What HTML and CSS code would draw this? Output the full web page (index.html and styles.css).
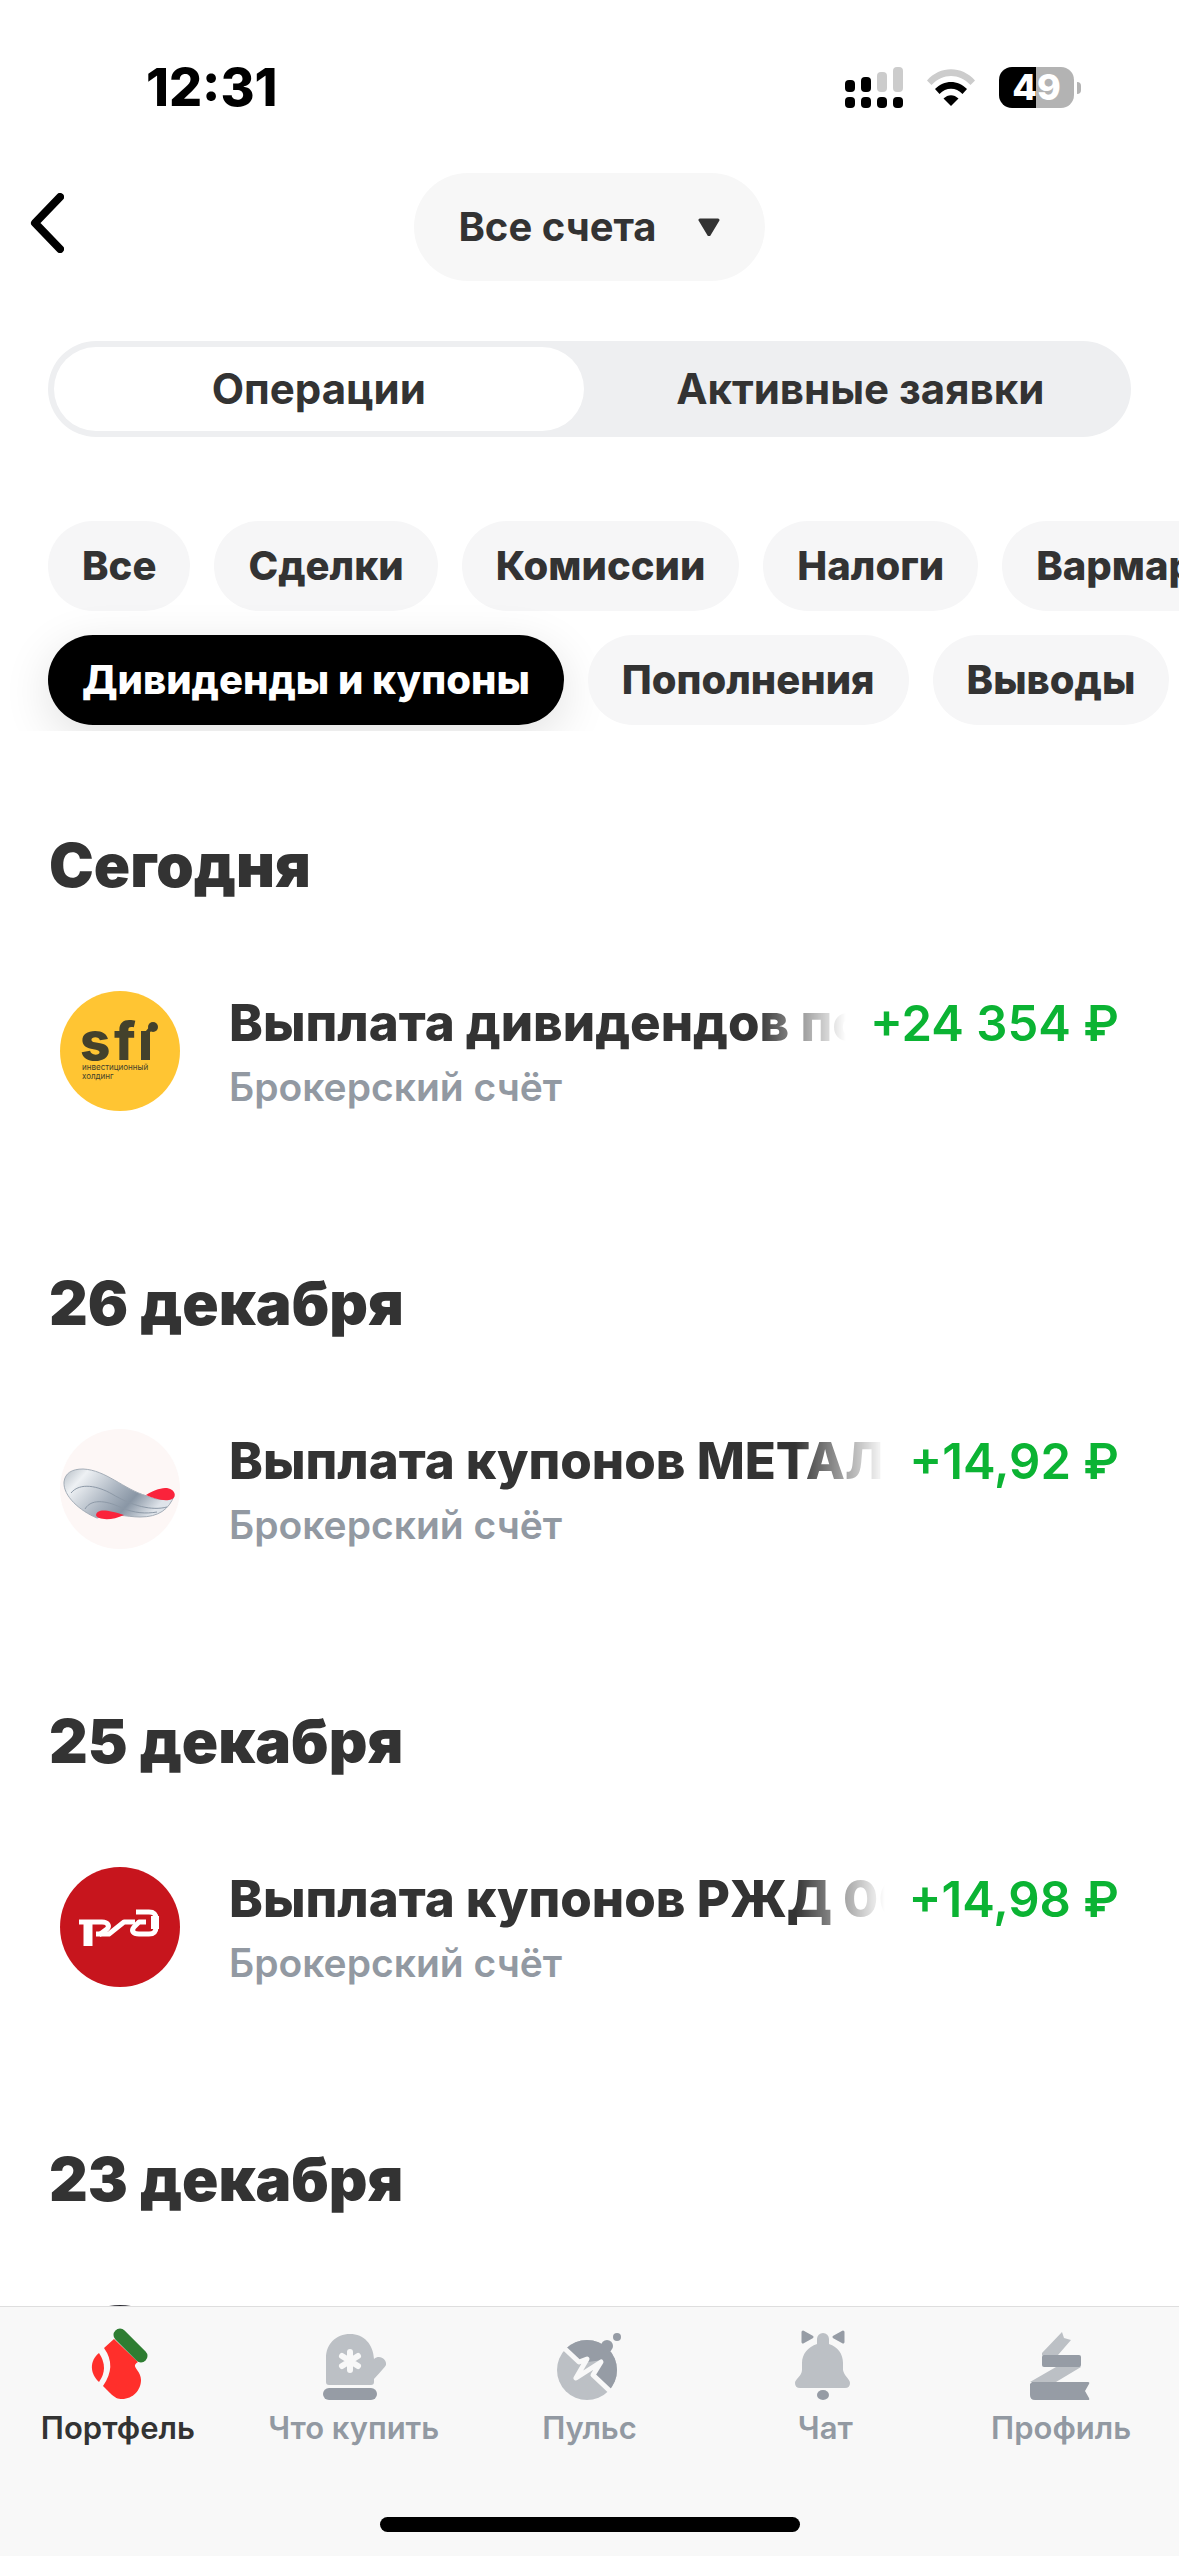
FILE: index.html
```html
<!DOCTYPE html>
<html lang="ru">
<head>
  <meta charset="UTF-8">
  <meta name="viewport" content="width=device-width, initial-scale=1">
  <title>Операции</title>
  <link rel="stylesheet" href="styles.css">
</head>
<body>
<div class="status-bar">
  <time class="clock">12:31</time>
  <div class="status-icons">
    <svg class="signal" viewBox="0 0 58 41" width="58" height="41">
      <rect x="0" y="13" width="10" height="12" rx="4"/>
      <rect x="16" y="10" width="10" height="15" rx="4"/>
      <rect class="dim" x="32" y="5" width="10" height="20" rx="4"/>
      <rect class="dim" x="48" y="0" width="10" height="25" rx="4"/>
      <rect x="0" y="30" width="10" height="11" rx="4"/>
      <rect x="16" y="30" width="10" height="11" rx="4"/>
      <rect x="32" y="30" width="10" height="11" rx="4"/>
      <rect x="48" y="30" width="10" height="11" rx="4"/>
    </svg>
    <svg class="wifi" viewBox="0 0 50 37" width="50" height="37">
      <path class="dim" d="M1 11.500C14-3.500 36-3.500 49 11.500L44.500 16C33 4 17 4 5.500 16L1 11.500Z"/>
      <path d="M9 20C18 10.500 32 10.500 41 20L36.500 25C30 18 20 18 13.500 25L9 20Z"/>
      <path d="M17.500 29.500C22 25 28 25 32.500 29.500L25 37L17.500 29.500Z"/>
    </svg>
    <div class="battery"><span class="battery-level">49</span></div>
  </div>
</div>

<header class="header">
  <button class="back" aria-label="Назад">
    <svg viewBox="0 0 34 60" width="34" height="60"><path d="M30 4L5 30L30 56"/></svg>
  </button>
  <button class="account">
    Все счета
    <svg viewBox="0 0 24 20" width="24" height="20"><path d="M3 4H21L12 19Z"/></svg>
  </button>
</header>

<div class="segments">
  <button class="segment active">Операции</button>
  <button class="segment">Активные заявки</button>
</div>

<div class="filters">
  <div class="chips">
    <button class="chip">Все</button>
    <button class="chip">Сделки</button>
    <button class="chip">Комиссии</button>
    <button class="chip">Налоги</button>
    <button class="chip">Вармаржа</button>
  </div>
  <div class="chips">
    <button class="chip selected">Дивиденды и купоны</button>
    <button class="chip">Пополнения</button>
    <button class="chip">Выводы</button>
  </div>
</div>

<main class="operations">
  <section class="day">
    <h2>Сегодня</h2>
    <div class="operation">
      <svg class="logo" viewBox="0 0 120 120">
        <circle cx="60" cy="60" r="60" fill="#ffc533"/>
        <g fill="#43412c">
          <text class="sfi" x="20 54 78" y="69">sfı</text>
          <path d="M85 44L92 36" stroke="#43412c" stroke-width="4"/>
          <circle cx="93" cy="36" r="5"/>
          <text class="sfi-note" x="22" y="79">инвестиционный</text>
          <text class="sfi-note" x="22" y="88">холдинг</text>
        </g>
      </svg>
      <div class="info">
        <div class="line">
          <span class="name">Выплата дивидендов по</span>
          <span class="amount">+24 354 ₽</span>
        </div>
        <div class="account-name">Брокерский счёт</div>
      </div>
    </div>
  </section>

  <section class="day">
    <h2>26 декабря</h2>
    <div class="operation">
      <svg class="logo" viewBox="0 0 120 120">
        <defs>
          <linearGradient id="wing" x1="0" y1="0" x2="1" y2="0.4">
            <stop offset="0" stop-color="#b4bcc4"/>
            <stop offset="0.2" stop-color="#eef1f4"/>
            <stop offset="0.55" stop-color="#a9b3bf"/>
            <stop offset="0.75" stop-color="#8996a5"/>
            <stop offset="1" stop-color="#dfe4ea"/>
          </linearGradient>
        </defs>
        <circle cx="60" cy="60" r="60" fill="#fdf7f6"/>
        <path d="M4 53C5 44 12 40 23 40C46 41 63 60 87 67C96 71 106 72 114 67C109 80 99 88 80 88C66 88 54 83 37 89C20 82 3 67 4 53Z" fill="url(#wing)" stroke="#a4adb7" stroke-width="1"/>
        <g fill="none" stroke="#8d99a7" stroke-width="1">
          <path d="M11 64C20 53 38 57 52 65C72 77 92 82 107 78"/>
          <path d="M25 80C32 68 50 73 62 79C74 84 86 85 97 83"/>
        </g>
        <g fill="#fa233b">
          <path d="M86 66C95 60 102 59 107 59C117 61 117 70 109 71C101 72 93 69 86 66Z"/>
          <path d="M36 86C37 80 46 80 64 86C52 92 37 91 36 86Z"/>
        </g>
      </svg>
      <div class="info">
        <div class="line">
          <span class="name">Выплата купонов МЕТАЛЛ</span>
          <span class="amount">+14,92 ₽</span>
        </div>
        <div class="account-name">Брокерский счёт</div>
      </div>
    </div>
  </section>

  <section class="day">
    <h2>25 декабря</h2>
    <div class="operation">
      <svg class="logo" viewBox="0 0 120 120">
        <circle cx="60" cy="60" r="60" fill="#c7151d"/>
        <g fill="none" stroke="#fff" stroke-linejoin="round">
          <path d="M19 55H42C48 55 50 59 47 62L39 68" stroke-width="5"/>
          <path d="M28 54V79" stroke-width="9"/>
          <path d="M36 67H49L64 55H75" stroke-width="5"/>
          <path d="M76 45H89C95 45 96 48 96 52V60C96 65 94 67 89 67H79C73 67 71 64 74 60L79 55H86" stroke-width="5"/>
          <path d="M95 49V62" stroke-width="8"/>
        </g>
      </svg>
      <div class="info">
        <div class="line">
          <span class="name">Выплата купонов РЖД 00</span>
          <span class="amount">+14,98 ₽</span>
        </div>
        <div class="account-name">Брокерский счёт</div>
      </div>
    </div>
  </section>

  <section class="day">
    <h2>23 декабря</h2>
    <div class="operation">
      <svg class="logo" viewBox="0 0 120 120"><circle cx="60" cy="60" r="60" fill="#2b2b33"/></svg>
    </div>
  </section>
</main>

<nav class="tab-bar">
  <div class="tabs">
    <a class="tab current" href="#">
      <svg viewBox="0 0 80 80" width="80" height="80">
        <path fill="#ff2f2b" d="M36 15L26 24Q39 42 25 62L32 69C37 74 40 75 44 75C55 75 63 66 63 56C63 48 56 44 57 41Q58 39 60 38Z"/>
        <path fill="#ff2f2b" d="M21 29C11 37 12 50 21 58Q31 44 21 29Z"/>
        <path stroke="#2e7d32" stroke-width="13" stroke-linecap="round" d="M42 11L63 32"/>
      </svg>
      Портфель
    </a>
    <a class="tab" href="#">
      <svg viewBox="0 0 80 80" width="80" height="80">
        <path class="light" d="M12 34C12 20 22 10 36 10C50 10 59 20 60 35C66 30 73 36 72 41Q71 43 60 55V58Q60 61 57 61H15Q12 61 12 58Z"/>
        <rect class="dark" x="9" y="64" width="54" height="12" rx="6"/>
        <path stroke="#f8f8f8" stroke-width="6" stroke-linecap="round" d="M36 28V46M28 32L44 42M44 32L28 42"/>
      </svg>
      Что купить
    </a>
    <a class="tab" href="#">
      <svg viewBox="0 0 80 80" width="80" height="80">
        <defs><clipPath id="ball"><circle cx="38" cy="46" r="30"/></clipPath></defs>
        <circle class="light" cx="38" cy="46" r="30"/>
        <path class="dark" clip-path="url(#ball)" d="M16 24L31 39L54 36L44 51L60 67H80V0H16Z"/>
        <circle class="dark" cx="58" cy="22" r="6"/>
        <circle class="dark" cx="68" cy="13" r="4"/>
        <path fill="none" stroke="#f8f8f8" stroke-width="5" stroke-linejoin="round" d="M14 23L30 38L38 35L27 54L52 38L44 51L62 68"/>
      </svg>
      Пульс
    </a>
    <a class="tab" href="#">
      <svg viewBox="0 0 80 80" width="80" height="80">
        <path class="light" d="M32 20V15A6 6 0 0 1 44 15V20C53 23 58 30 58 39V46C59 52 65 55 65 59Q65 64 60 64H15Q10 64 10 59C10 55 17 52 17 46V39C17 30 23 23 32 20Z"/>
        <path class="dark bow" d="M18 8L27 13L18 18ZM58 8L49 13L58 18Z"/>
        <ellipse class="dark" cx="38" cy="71" rx="6" ry="5"/>
      </svg>
      Чат
    </a>
    <a class="tab" href="#">
      <svg viewBox="0 0 80 80" width="80" height="80">
        <path class="light" d="M21 29L41 8L43 14L50 16L37 31L60 43L35 58H9L35 43L21 31Z"/>
        <rect class="dark" x="21" y="31" width="39" height="12" rx="2"/>
        <path class="dark" d="M9 60L11 58H67Q69 58 68 60L64 67L68 74Q69 76 67 76H14Q9 76 9 71Z"/>
      </svg>
      Профиль
    </a>
  </div>
  <div class="home-indicator"></div>
</nav>
</body>
</html>
```

FILE: styles.css
```css
* {
  box-sizing: border-box;
}
body {
  font-family: Inter, 'Liberation Sans', sans-serif;
  background: #fff;
  color: #333;
  margin: 0;
  height: 100vh;
  display: flex;
  flex-direction: column;
  overflow: hidden;
}
button {
  font: inherit;
  color: inherit;
  background: none;
  border: none;
  padding: 0;
  cursor: pointer;
}
svg {
  display: block;
  flex: none;
}

/* status bar */
.status-bar {
  display: flex;
  justify-content: space-between;
  align-items: center;
  height: 140px;
  padding: 35px 98px 0 146px;
  color: #000;
}
.clock {
  font-size: 52px;
  font-weight: 800;
}
.status-icons {
  display: flex;
  align-items: center;
  gap: 23px;
}
.dim {
  fill: #ccc;
}
.battery {
  display: flex;
  align-items: center;
  gap: 3px;
}
.battery::after {
  content: "";
  width: 4px;
  height: 12px;
  border-radius: 0 6px 6px 0;
  background: #b3b3b3;
}
.battery-level {
  width: 75px;
  line-height: 41px;
  border-radius: 13px;
  background: linear-gradient(90deg, #000 49%, #b3b3b3 49%);
  color: #fff;
  font-size: 36px;
  font-weight: 800;
  text-align: center;
}

/* header */
.header {
  display: grid;
  grid-template-columns: 1fr auto 1fr;
  align-items: center;
  padding: 33px 30px 0;
}
.back {
  justify-self: start;
  padding-bottom: 9px;
}
.back path {
  fill: none;
  stroke: #000;
  stroke-width: 8;
  stroke-linecap: round;
  stroke-linejoin: round;
}
.account {
  display: flex;
  align-items: center;
  gap: 40px;
  height: 108px;
  padding: 0 44px 2px;
  border-radius: 54px;
  background: #f7f7f7;
  font-size: 40px;
  font-weight: 700;
}
.account path {
  fill: #333;
  stroke: #333;
  stroke-width: 3;
  stroke-linejoin: round;
}

/* operations / orders switch */
.segments {
  display: grid;
  grid-template-columns: 1fr 1fr;
  gap: 12px;
  margin: 60px 48px 0;
  padding: 6px;
  border-radius: 48px;
  background: #eeeff1;
}
.segment {
  height: 84px;
  padding-bottom: 2px;
  border-radius: 42px;
  font-size: 42px;
  font-weight: 700;
}
.segment.active {
  background: #fff;
}

/* filters */
.filters {
  display: flex;
  flex-direction: column;
  gap: 24px;
  margin-top: 84px;
  padding: 0 0 6px 48px;
  overflow: hidden;
}
.chips {
  display: flex;
  gap: 24px;
}
.chip {
  flex: none;
  height: 90px;
  padding: 0 34px 2px;
  border-radius: 45px;
  background: #f6f6f7;
  font-size: 40px;
  font-weight: 800;
  white-space: nowrap;
}
.chip.selected {
  background: #000;
  color: #fff;
  box-shadow: 0 12px 48px rgba(0, 0, 0, 0.12);
}

/* list of operations */
.operations {
  flex: 1;
  min-height: 0;
  padding: 98px 60px 0 49px;
  overflow: hidden;
}
.day {
  padding-bottom: 156px;
}
.day h2 {
  margin: 0 0 90px;
  font-size: 60px;
  line-height: 72px;
  font-weight: 900;
}
.operation {
  display: flex;
  gap: 49px;
  padding-left: 11px;
}
.logo {
  width: 120px;
  height: 120px;
}
.sfi {
  font-size: 53px;
  font-weight: 800;
}
.sfi-note {
  font-size: 8px;
}
.info {
  flex: 1;
  min-width: 0;
  padding-top: 2px;
}
.line {
  display: flex;
  align-items: baseline;
  gap: 24px;
  margin-bottom: 10px;
  font-size: 51px;
  line-height: 60px;
  white-space: nowrap;
}
.name {
  flex: 1;
  min-width: 0;
  overflow: hidden;
  font-weight: 800;
  -webkit-mask-image: linear-gradient(270deg, transparent, #000 90px);
  mask-image: linear-gradient(270deg, transparent, #000 90px);
}
.amount {
  color: #0bb333;
  font-size: 49px;
  font-weight: 600;
}
.account-name {
  color: #9299a2;
  font-size: 39px;
  line-height: 46px;
  font-weight: 600;
}

/* bottom navigation */
.tab-bar {
  flex: none;
  padding: 17px 0 24px;
  border-top: 1px solid #dedede;
  background: #f8f8f8;
}
.tabs {
  display: grid;
  grid-template-columns: repeat(5, 1fr);
}
.tab {
  display: flex;
  flex-direction: column;
  align-items: center;
  gap: 6px;
  color: #9299a2;
  font-size: 31px;
  line-height: 36px;
  font-weight: 600;
  text-decoration: none;
}
.tab.current {
  color: #333;
}
.light {
  fill: #bcc0c5;
}
.dark {
  fill: #969ca5;
}
.bow {
  stroke: #969ca5;
  stroke-width: 3;
  stroke-linejoin: round;
}
.home-indicator {
  width: 420px;
  height: 15px;
  margin: 71px auto 0;
  border-radius: 8px;
  background: #000;
}
```
